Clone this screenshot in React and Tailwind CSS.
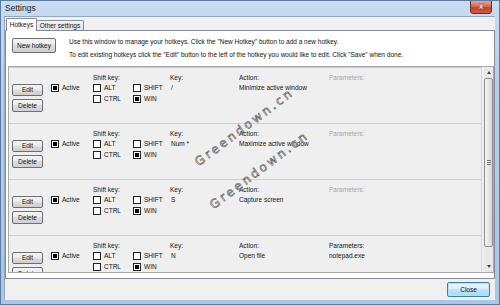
import React from "react";

const btnBg =
  "bg-[linear-gradient(#f3f3f3,#ebebeb_45%,#dddddd_50%,#cfcfcf)] border border-[#707070] rounded-[2px] text-[#111]";

function Btn({ children, className }) {
  return (
    <div className={"flex items-center justify-center " + btnBg + " " + className}>
      {children}
    </div>
  );
}

function CB({ checked, label }) {
  return (
    <div className="flex items-center h-[11px]">
      <div className="w-[8px] h-[8px] border border-[#222] bg-white flex items-center justify-center shrink-0">
        {checked && <div className="w-[4px] h-[4px] bg-black" />}
      </div>
      <span className="ml-[3px] leading-[11px]">{label}</span>
    </div>
  );
}

function Row({ k, action, params }) {
  return (
    <div className="h-[56px] shrink-0 flex border-t border-[#cfcfcf] pl-[3px] border-r border-r-[#d8d8d8]">
      <div className="w-[39px] pt-[16px] flex flex-col gap-[3px]">
        <Btn className="w-[31px] h-[12px]">Edit</Btn>
        <Btn className="w-[31px] h-[13px]">Delete</Btn>
      </div>
      <div className="w-[42px] pt-[14px]">
        <CB checked label="Active" />
      </div>
      <div className="w-[77px] pt-[5px]">
        <div className="h-[9px] leading-[9px]">Shift key:</div>
        <div className="grid grid-cols-[40px_37px]">
          <CB label="ALT" />
          <CB label="SHIFT" />
          <CB label="CTRL" />
          <CB checked label="WIN" />
        </div>
      </div>
      <div className="w-[69px] pt-[5px]">
        <div className="h-[9px] leading-[9px]">Key:</div>
        <div className="h-[11px] leading-[11px] pl-[1px]">{k}</div>
      </div>
      <div className="w-[90px] pt-[5px]">
        <div className="h-[9px] leading-[9px]">Action:</div>
        <div className="h-[11px] leading-[11px]">{action}</div>
      </div>
      <div className="flex-1 pt-[5px]">
        <div className={"h-[9px] leading-[9px] " + (params ? "text-[#111]" : "text-[#a6a6a6]")}>
          Parameters:
        </div>
        <div className="h-[11px] leading-[11px]">{params}</div>
      </div>
    </div>
  );
}

function Watermark({ className }) {
  return (
    <div
      className={
        "absolute [transform-origin:0_100%] [transform:rotate(-37deg)] font-['DejaVu_Sans',sans-serif] font-normal text-[12px] leading-none tracking-[2.8px] text-white [-webkit-text-stroke:0.6px_#555] whitespace-nowrap " +
        className
      }
    >
      Greendown.cn
    </div>
  );
}

export default function App() {
  const rows = [
    { k: "/", action: "Minimize active window" },
    { k: "Num *", action: "Maximize active window" },
    { k: "S", action: "Capture screen" },
    { k: "N", action: "Open file", params: "notepad.exe" },
  ];
  return (
    <div className="relative w-[500px] h-[305px] overflow-hidden flex flex-col bg-[linear-gradient(#c9dcf1,#b4cde8_30%,#aac6e6)] border border-[#5a7ca3] font-['Liberation_Sans',Arial,sans-serif] text-[6.5px] text-[#111]">
      {/* title bar */}
      <div className="h-[15px] shrink-0 flex items-start">
        <div className="pl-[4px] pt-[3px] text-[8.5px] leading-[9px] text-[#1b1b1b]">Settings</div>
        <div className="ml-auto mr-[7px] w-[22px] h-[14px] -mt-[1px] rounded-b-[3px] border border-[#6e2a20] bg-[linear-gradient(#eaa493,#d8674f_45%,#c4402a_55%,#d35a42)] flex items-center justify-center">
          <span className="text-white font-['DejaVu_Sans',sans-serif] font-bold text-[8px] leading-none [-webkit-text-stroke:0.3px_#5a2018]">x</span>
        </div>
      </div>
      {/* client */}
      <div className="flex-1 flex ml-[3px] mr-[4px] mb-[4px]">
        <div className="flex-1 bg-[#f0f0f0] border-l border-t border-[#8fa8c6] flex flex-col">
          {/* tabs */}
          <div className="h-[13px] pt-[1px] flex items-end pl-[1px]">
            <div className="h-[13px] w-[31px] bg-white border border-b-0 border-[#898c95] flex items-center justify-center relative z-10 -mb-px rounded-t-[2px]">
              Hotkeys
            </div>
            <div className="h-[10px] w-[47px] bg-[linear-gradient(#f3f3f3,#e3e3e3)] border border-b-0 border-l-0 border-[#898c95] flex items-center justify-center rounded-tr-[2px]">
              Other settings
            </div>
          </div>
          {/* panel */}
          <div className="h-[249px] bg-white border border-[#898c95] flex flex-col">
            <div className="h-[35px] shrink-0 flex pl-[6px]">
              <Btn className="mt-[7px] w-[44px] h-[15px]">New hotkey</Btn>
              <div className="ml-[13px] pt-[4px] leading-[13px]">
                <div>Use this window to manage your hotkeys. Click the "New Hotkey" button to add a new hotkey.</div>
                <div>To edit existing hotkeys click the "Edit" button to the left of the hotkey you would like to edit. Click "Save" when done.</div>
              </div>
            </div>
            <div className="h-[207px] ml-[2px] border border-[#a8a8a8] bg-[#efefef] flex overflow-hidden">
              <div className="flex-1 flex flex-col mr-[2px]">
                {rows.map((r, i) => (
                  <Row key={i} {...r} />
                ))}
              </div>
              <div className="w-[9px] flex flex-col bg-[#e8e8e8]">
                <div className="h-[11px] flex items-center justify-center">
                  <div className="w-0 h-0 border-l-[2.5px] border-r-[2.5px] border-b-[3px] border-l-transparent border-r-transparent border-b-[#444]" />
                </div>
                <div className="h-[169px] rounded-[2px] border border-[#8f8f8f] bg-[linear-gradient(90deg,#f6f6f6,#e6e6e6_50%,#d6d6d6)] flex items-center justify-center">
                  <div className="flex flex-col gap-[1px]">
                    <div className="w-[4px] h-px bg-[#777]" />
                    <div className="w-[4px] h-px bg-[#777]" />
                    <div className="w-[4px] h-px bg-[#777]" />
                  </div>
                </div>
                <div className="flex-1" />
                <div className="h-[11px] flex items-center justify-center">
                  <div className="w-0 h-0 border-l-[2.5px] border-r-[2.5px] border-t-[3px] border-l-transparent border-r-transparent border-t-[#444]" />
                </div>
              </div>
            </div>
          </div>
          {/* footer */}
          <div className="flex-1 flex justify-end items-start pr-[5px] pt-[3px]">
            <div className="w-[43px] h-[15px] rounded-[2px] border border-[#3c7fb1] bg-[linear-gradient(#eaf6fd,#d9f0fc_45%,#bee6fd_50%,#a7d9f5)] flex items-center justify-center shadow-[inset_0_0_0_1px_#b8e0f8]">
              Close
            </div>
          </div>
        </div>
      </div>
      <Watermark className="left-[199px] top-[155px]" />
      <Watermark className="left-[214px] top-[198px]" />
    </div>
  );
}
